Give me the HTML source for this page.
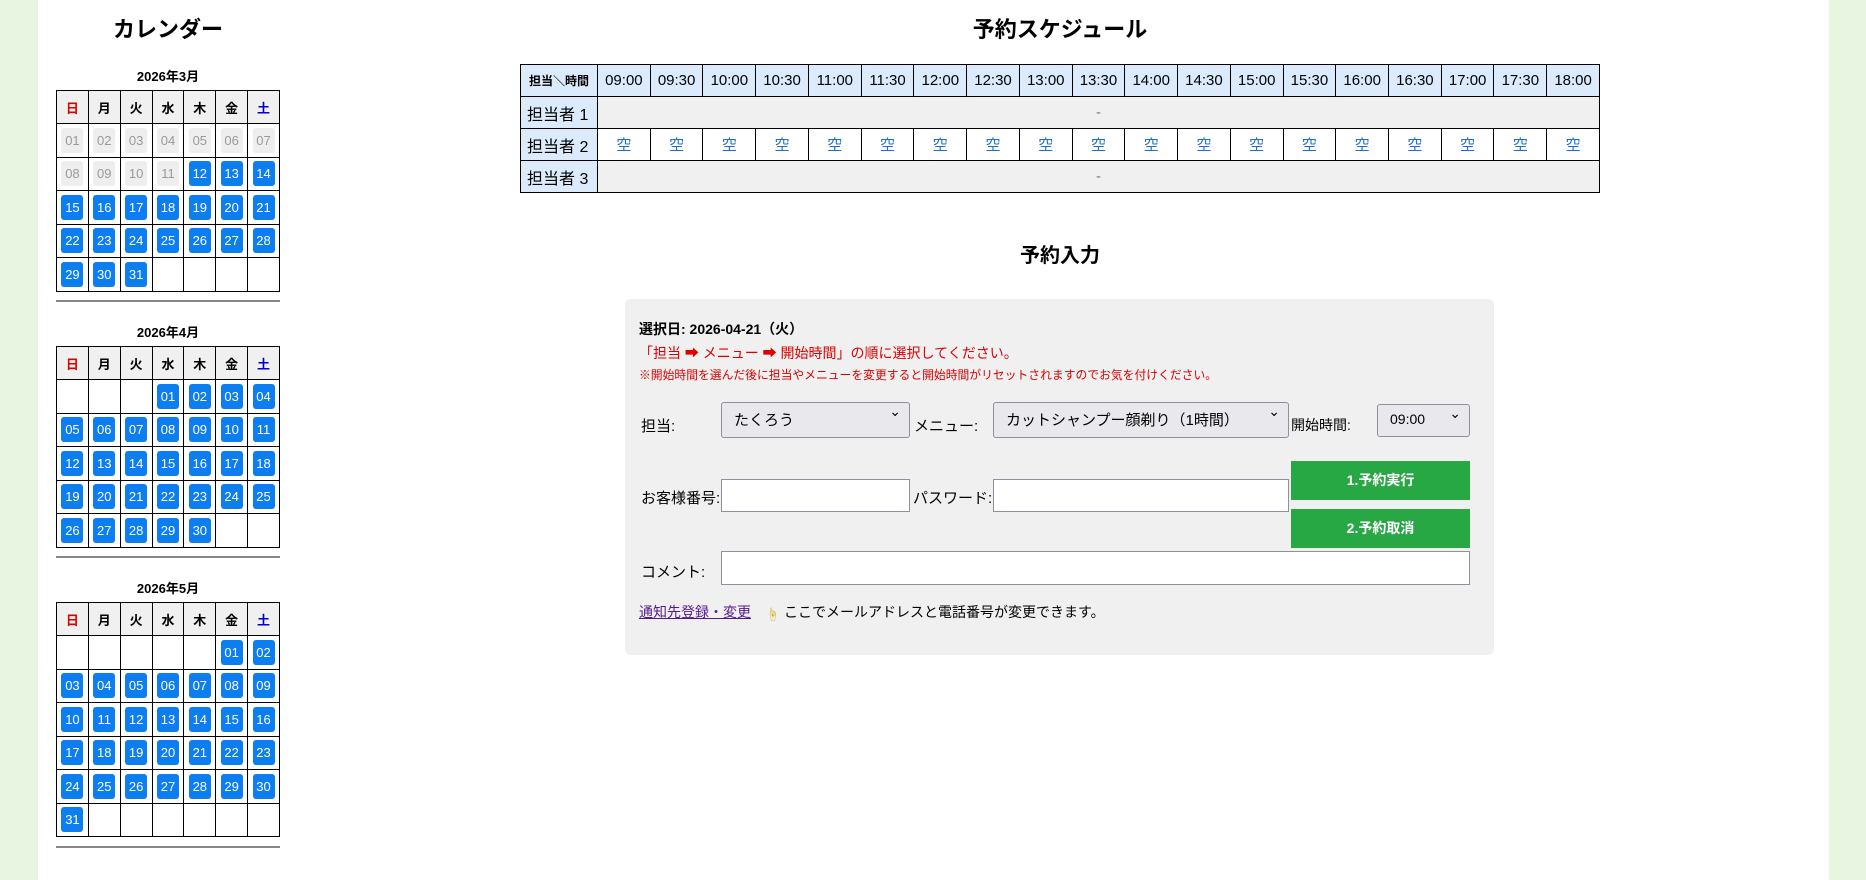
<!DOCTYPE html>
<html><head><meta charset="utf-8">
<style>
*{box-sizing:border-box;margin:0;padding:0}
body{width:1866px;height:880px;background:#e8f5e0;font-family:"Liberation Sans","Noto Sans CJK JP",sans-serif;position:relative;overflow:hidden;color:#000}
.main{position:absolute;left:38px;top:0;width:1791px;height:880px;background:#fff}
h2{position:absolute;font-size:22px;font-weight:bold;text-align:center}
.mt{position:absolute;left:56px;width:224px;text-align:center;font-size:13px;font-weight:bold}
table.cal{position:absolute;left:56px;width:224px;border-collapse:collapse;table-layout:fixed}
table.cal td,table.cal th{border:1px solid #000;text-align:center;height:33.5px;padding:0;font-size:13px}
table.cal th{background:#f0f0f0;height:33px;font-weight:bold}
.b{display:inline-block;width:22px;height:25px;line-height:25px;border-radius:3px;background:#0d7ef0;color:#fff;font-size:13px}
.g{background:#eee;color:#999}
.hr{position:absolute;left:56px;width:224px;height:2px;background:#888}
table.sch{position:absolute;left:520px;top:64px;width:1080px;border-collapse:collapse;table-layout:fixed}
table.sch td{border:1px solid #000;text-align:center;height:32px;font-size:15px;padding:0}
.hd{background:#dcebfb}
.sch .nm{background:#dcebfb;font-size:16px;text-align:left;padding-left:6px}
.em{background:#f0f0f0;color:#777}
.k{color:#1a6fd0;font-size:13px}
.box{position:absolute;left:625px;top:299px;width:869px;height:356px;background:#f0f0f0;border-radius:6px}
.sel{position:absolute;background:#e9e9ed;border:1px solid #8f8f9d;border-radius:3px;font-size:15px;padding:6px 0 0 12px}
.sel:after{content:"⌄";position:absolute;right:8px;top:0px;font-size:14px}
.inp{position:absolute;background:#fff;border:1px solid #8f8f9d}
.btn{position:absolute;left:1291px;width:179px;background:#28a745;color:#fff;font-weight:bold;font-size:14px;text-align:center}
.lb{position:absolute;font-size:15px}
</style></head><body>
<div class="main"></div>
<h2 style="left:56px;width:224px;top:12px">カレンダー</h2>
<div class="mt" style="top:66px">2026年3月</div>
<table class="cal" style="top:90px">
<tr><th style="color:#d00">日</th><th>月</th><th>火</th><th>水</th><th>木</th><th>金</th><th style="color:#00c">土</th></tr>
<tr><td><span class="b g">01</span></td><td><span class="b g">02</span></td><td><span class="b g">03</span></td><td><span class="b g">04</span></td><td><span class="b g">05</span></td><td><span class="b g">06</span></td><td><span class="b g">07</span></td></tr>
<tr><td><span class="b g">08</span></td><td><span class="b g">09</span></td><td><span class="b g">10</span></td><td><span class="b g">11</span></td><td><span class="b">12</span></td><td><span class="b">13</span></td><td><span class="b">14</span></td></tr>
<tr><td><span class="b">15</span></td><td><span class="b">16</span></td><td><span class="b">17</span></td><td><span class="b">18</span></td><td><span class="b">19</span></td><td><span class="b">20</span></td><td><span class="b">21</span></td></tr>
<tr><td><span class="b">22</span></td><td><span class="b">23</span></td><td><span class="b">24</span></td><td><span class="b">25</span></td><td><span class="b">26</span></td><td><span class="b">27</span></td><td><span class="b">28</span></td></tr>
<tr><td><span class="b">29</span></td><td><span class="b">30</span></td><td><span class="b">31</span></td><td></td><td></td><td></td><td></td></tr>
</table>
<div class="hr" style="top:300px"></div>
<div class="mt" style="top:322px">2026年4月</div>
<table class="cal" style="top:346px">
<tr><th style="color:#d00">日</th><th>月</th><th>火</th><th>水</th><th>木</th><th>金</th><th style="color:#00c">土</th></tr>
<tr><td></td><td></td><td></td><td><span class="b">01</span></td><td><span class="b">02</span></td><td><span class="b">03</span></td><td><span class="b">04</span></td></tr>
<tr><td><span class="b">05</span></td><td><span class="b">06</span></td><td><span class="b">07</span></td><td><span class="b">08</span></td><td><span class="b">09</span></td><td><span class="b">10</span></td><td><span class="b">11</span></td></tr>
<tr><td><span class="b">12</span></td><td><span class="b">13</span></td><td><span class="b">14</span></td><td><span class="b">15</span></td><td><span class="b">16</span></td><td><span class="b">17</span></td><td><span class="b">18</span></td></tr>
<tr><td><span class="b">19</span></td><td><span class="b">20</span></td><td><span class="b">21</span></td><td><span class="b">22</span></td><td><span class="b">23</span></td><td><span class="b">24</span></td><td><span class="b">25</span></td></tr>
<tr><td><span class="b">26</span></td><td><span class="b">27</span></td><td><span class="b">28</span></td><td><span class="b">29</span></td><td><span class="b">30</span></td><td></td><td></td></tr>
</table>
<div class="hr" style="top:556px"></div>
<div class="mt" style="top:578px">2026年5月</div>
<table class="cal" style="top:602px">
<tr><th style="color:#d00">日</th><th>月</th><th>火</th><th>水</th><th>木</th><th>金</th><th style="color:#00c">土</th></tr>
<tr><td></td><td></td><td></td><td></td><td></td><td><span class="b">01</span></td><td><span class="b">02</span></td></tr>
<tr><td><span class="b">03</span></td><td><span class="b">04</span></td><td><span class="b">05</span></td><td><span class="b">06</span></td><td><span class="b">07</span></td><td><span class="b">08</span></td><td><span class="b">09</span></td></tr>
<tr><td><span class="b">10</span></td><td><span class="b">11</span></td><td><span class="b">12</span></td><td><span class="b">13</span></td><td><span class="b">14</span></td><td><span class="b">15</span></td><td><span class="b">16</span></td></tr>
<tr><td><span class="b">17</span></td><td><span class="b">18</span></td><td><span class="b">19</span></td><td><span class="b">20</span></td><td><span class="b">21</span></td><td><span class="b">22</span></td><td><span class="b">23</span></td></tr>
<tr><td><span class="b">24</span></td><td><span class="b">25</span></td><td><span class="b">26</span></td><td><span class="b">27</span></td><td><span class="b">28</span></td><td><span class="b">29</span></td><td><span class="b">30</span></td></tr>
<tr><td><span class="b">31</span></td><td></td><td></td><td></td><td></td><td></td><td></td></tr>
</table>
<div class="hr" style="top:846px"></div>

<h2 style="left:860px;width:400px;top:12px">予約スケジュール</h2>
<table class="sch">
<col style="width:77px">
<tr><td class="hd" style="font-size:12px;font-weight:bold">担当＼時間</td><td class="hd">09:00</td><td class="hd">09:30</td><td class="hd">10:00</td><td class="hd">10:30</td><td class="hd">11:00</td><td class="hd">11:30</td><td class="hd">12:00</td><td class="hd">12:30</td><td class="hd">13:00</td><td class="hd">13:30</td><td class="hd">14:00</td><td class="hd">14:30</td><td class="hd">15:00</td><td class="hd">15:30</td><td class="hd">16:00</td><td class="hd">16:30</td><td class="hd">17:00</td><td class="hd">17:30</td><td class="hd">18:00</td></tr>
<tr><td class="nm">担当者 1</td><td class="em" colspan="19">-</td></tr>
<tr><td class="nm">担当者 2</td><td class="k">空</td><td class="k">空</td><td class="k">空</td><td class="k">空</td><td class="k">空</td><td class="k">空</td><td class="k">空</td><td class="k">空</td><td class="k">空</td><td class="k">空</td><td class="k">空</td><td class="k">空</td><td class="k">空</td><td class="k">空</td><td class="k">空</td><td class="k">空</td><td class="k">空</td><td class="k">空</td><td class="k">空</td></tr>
<tr><td class="nm">担当者 3</td><td class="em" colspan="19">-</td></tr>
</table>

<h2 style="left:860px;width:400px;top:239px;font-size:20px">予約入力</h2>
<div class="box"></div>
<div class="lb" style="left:639px;top:319px;font-size:14px;font-weight:bold">選択日: 2026-04-21（火）</div>
<div class="lb" style="left:639px;top:343px;font-size:14px;color:#d00">「担当 ➡ メニュー ➡ 開始時間」の順に選択してください。</div>
<div class="lb" style="left:639px;top:366px;font-size:11.8px;color:#d00">※開始時間を選んだ後に担当やメニューを変更すると開始時間がリセットされますのでお気を付けください。</div>
<div class="lb" style="left:641px;top:415px">担当:</div>
<div class="sel" style="left:721px;top:402px;width:189px;height:36px">たくろう</div>
<div class="lb" style="left:914px;top:415px">メニュー:</div>
<div class="sel" style="left:993px;top:402px;width:296px;height:36px">カットシャンプー顔剃り（1時間）</div>
<div class="lb" style="left:1291px;top:415px;font-size:14px">開始時間:</div>
<div class="sel" style="left:1377px;top:404px;width:93px;height:33px;font-size:14px">09:00</div>
<div class="btn" style="top:461px;height:39px;line-height:39px">1.予約実行</div>
<div class="btn" style="top:509px;height:39px;line-height:39px">2.予約取消</div>
<div class="lb" style="left:641px;top:487px">お客様番号:</div>
<div class="inp" style="left:721px;top:479px;width:189px;height:33px"></div>
<div class="lb" style="left:913px;top:487px">パスワード:</div>
<div class="inp" style="left:993px;top:479px;width:296px;height:33px"></div>
<div class="lb" style="left:641px;top:561px">コメント:</div>
<div class="inp" style="left:721px;top:551px;width:749px;height:34px"></div>
<div class="lb" style="left:639px;top:602px;font-size:14px;color:#551a8b;text-decoration:underline">通知先登録・変更</div>
<div class="lb" style="left:766px;top:604px;font-size:13px;color:#d9a400">☝</div>
<div class="lb" style="left:784px;top:602px;font-size:14px">ここでメールアドレスと電話番号が変更できます。</div>
</body></html>
